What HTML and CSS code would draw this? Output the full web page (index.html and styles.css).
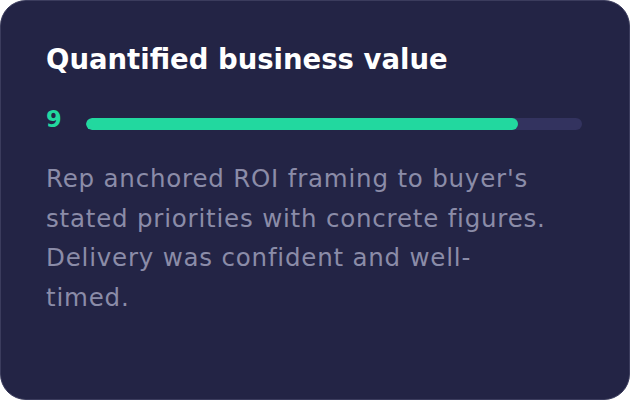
FILE: index.html
```html
<!DOCTYPE html>
<html lang="en">
<head>
<meta charset="utf-8">
<link rel="stylesheet" href="styles.css">
</head>
<body>
<div class="card">
  <h2 class="title">Quantified business value</h2>
  <div class="score-row">
    <span class="score">9</span>
    <div class="track"><div class="fill" style="width: 87.1%"></div></div>
  </div>
  <p class="desc">Rep anchored ROI framing to buyer's stated priorities with concrete figures. Delivery was confident and well-timed.</p>
</div>
</body>
</html>
```
FILE: styles.css
```css
html, body {
  margin: 0;
  padding: 0;
  background: #ffffff;
}
.card {
  box-sizing: border-box;
  width: 630px;
  height: 400px;
  background: #232445;
  border: 1px solid #3b3c5d;
  border-radius: 26px;
  padding: 41px 47px 0 45px;
  font-family: "DejaVu Sans", sans-serif;
}
.title {
  margin: 0;
  font-size: 27.5px;
  font-weight: 700;
  color: #ffffff;
  line-height: 34px;
}
.score-row {
  display: flex;
  align-items: flex-start;
  gap: 24px;
  margin-top: 32px;
}
.score {
  font-size: 22.5px;
  font-weight: 700;
  color: #22d89f;
  line-height: 22px;
  width: 16px;
  flex: none;
}
.track {
  flex: 1;
  height: 12px;
  margin-top: 10px;
  border-radius: 6px;
  background: #33335f;
  overflow: hidden;
}
.fill {
  height: 100%;
  background: #22d89f;
  border-radius: 6px;
}
.desc {
  margin: 29px 0 0;
  max-width: 504px;
  font-size: 24.5px;
  line-height: 39.6px;
  letter-spacing: 0.8px;
  color: #8b8ca8;
}
```
